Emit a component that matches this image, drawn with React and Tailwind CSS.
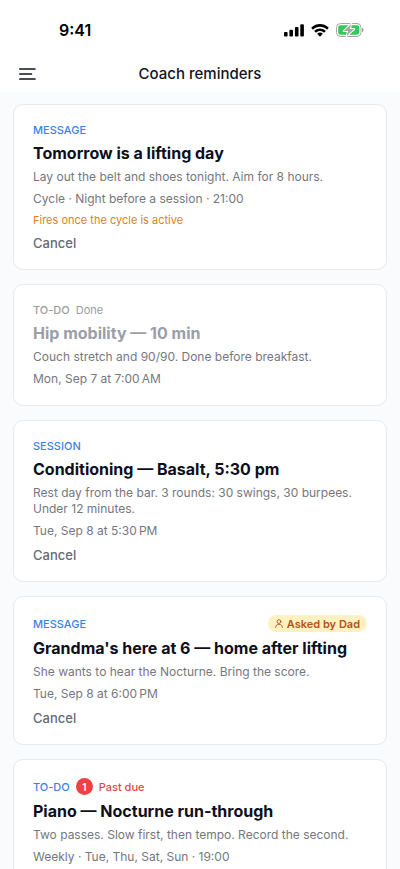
import { clsx } from 'clsx';

const reminders = [
  {
    id: 1,
    kind: 'MESSAGE',
    title: 'Tomorrow is a lifting day',
    body: 'Lay out the belt and shoes tonight. Aim for 8 hours.',
    when: 'Cycle · Night before a session · 21:00',
    note: 'Fires once the cycle is active',
    canCancel: true
  },
  {
    id: 2,
    kind: 'TO-DO',
    title: 'Hip mobility — 10 min',
    body: 'Couch stretch and 90/90. Done before breakfast.',
    when: 'Mon, Sep 7 at 7:00\u2009AM',
    done: true
  },
  {
    id: 3,
    kind: 'SESSION',
    title: 'Conditioning — Basalt, 5:30 pm',
    body: 'Rest day from the bar. 3 rounds: 30 swings, 30 burpees. Under 12 minutes.',
    when: 'Tue, Sep 8 at 5:30\u2009PM',
    canCancel: true
  },
  {
    id: 4,
    kind: 'MESSAGE',
    title: "Grandma's here at 6 — home after lifting",
    body: 'She wants to hear the Nocturne. Bring the score.',
    when: 'Tue, Sep 8 at 6:00\u2009PM',
    askedBy: 'Dad',
    canCancel: true
  },
  {
    id: 5,
    kind: 'TO-DO',
    title: 'Piano — Nocturne run-through',
    body: 'Two passes. Slow first, then tempo. Record the second.',
    when: 'Weekly · Tue, Thu, Sat, Sun · 19:00',
    pastDue: 1
  }
];

function StatusBar() {
  return (
    <div className="flex h-14 items-center justify-between pt-1 pr-9 pl-[59px]">
      <span className="text-base font-semibold text-black">9:41</span>
      <div className="flex items-center gap-[7px]">
        <svg width="20" height="13" viewBox="0 0 20 13" fill="#000" aria-hidden="true">
          <rect x="0" y="8" width="3.6" height="4.5" rx="1" />
          <rect x="5.4" y="5.8" width="3.6" height="6.7" rx="1" />
          <rect x="10.9" y="3" width="3.6" height="9.5" rx="1" />
          <rect x="16.3" y="0.2" width="3.6" height="12.3" rx="1" />
        </svg>
        <svg width="18" height="13" viewBox="0 0 17 12.3" fill="#000" aria-hidden="true">
          <path d="M8.5 2.6c2.4 0 4.7.9 6.4 2.6.1.1.3.1.5 0l1.2-1.3c.1-.1.1-.4 0-.5C12-1 5-1 .4 3.4c-.1.1-.1.4 0 .5l1.2 1.3c.1.1.3.1.5 0C3.8 3.5 6.1 2.6 8.5 2.6Z" />
          <path d="M8.5 6.7c1.3 0 2.6.5 3.5 1.4.1.1.4.1.5 0l1.3-1.3c.1-.1.1-.4 0-.5-3-2.8-7.6-2.8-10.6 0-.1.1-.1.4 0 .5l1.3 1.3c.1.1.4.1.5 0 .9-.9 2.2-1.4 3.5-1.4Z" />
          <path d="M11 9.5c.1-.1.1-.4 0-.5-1.5-1.2-3.5-1.2-5 0-.1.1-.1.4 0 .5l2.2 2.3c.1.1.4.1.5 0Z" />
        </svg>
        <svg width="28" height="14" viewBox="0 0 28 14" aria-hidden="true">
          <rect x="0.5" y="0.5" width="24.5" height="13" rx="4" fill="#fff" stroke="#a6a6a6" />
          <rect x="2.2" y="2.2" width="21.1" height="9.6" rx="2.4" fill="#34c759" />
          <path d="M26 4.8v4.4c1-.4 1.7-1.2 1.7-2.2S27 5.200 26 4.800Z" fill="#a6a6a6" />
          <path
            d="M15.2 1 7.800 8h4.400l-1.700 5 7.700-7h-4.500Z"
            fill="#a6a6a6"
            stroke="#fff"
            strokeWidth="2"
            paintOrder="stroke"
            strokeLinejoin="round"
          />
        </svg>
      </div>
    </div>
  );
}

function NavBar() {
  return (
    <div className="grid h-9 grid-cols-[48px_1fr_48px] items-center">
      <button type="button" aria-label="Menu" className="flex h-9 items-center pl-[19px]">
        <svg width="17" height="12" viewBox="0 0 17 12" fill="none" stroke="#11131f" strokeWidth="1.7" strokeLinecap="round" aria-hidden="true">
          <path d="M.9 1h15M.9 6h11.5M.9 11h15" />
        </svg>
      </button>
      <h1 className="text-center text-[15px] leading-5 font-medium text-[#11131f]">Coach reminders</h1>
    </div>
  );
}

function AskedBy({ name }) {
  return (
    <span className="ml-auto flex h-[17px] items-center gap-1 rounded-full bg-[#fff1c2] px-[7px] text-[11px] leading-[14px] font-semibold text-[#b45317]">
      <svg width="8" height="9" viewBox="0 0 8 9" fill="none" stroke="currentColor" strokeWidth="0.9" strokeLinecap="round" aria-hidden="true">
        <circle cx="4" cy="2.6" r="1.9" />
        <path d="M.6 8.400c0-1.900 1.500-3.100 3.400-3.100s3.400 1.200 3.400 3.100" />
      </svg>
      Asked by {name}
    </span>
  );
}

function ReminderCard({ reminder }) {
  const { kind, title, body, when, note, done, pastDue, askedBy, canCancel } = reminder;

  return (
    <li className="flex flex-col gap-1.5 rounded-[10px] border border-[#e8eaed] bg-white px-[19px] py-[18px] text-xs leading-4 text-[#75777f]">
      <div className="flex items-center gap-1.5 text-[11px] leading-[14px]">
        <span className={clsx('font-medium', done ? 'text-[#9b9da5]' : 'text-[#3b82e6]')}>{kind}</span>
        {done && <span className="text-[#9b9da5]">Done</span>}
        {pastDue && (
          <>
            <span className="flex size-[17px] items-center justify-center rounded-full bg-[#ef4043] text-[10px] font-semibold text-white">
              {pastDue}
            </span>
            <span className="font-medium text-[#e5484a]">Past due</span>
          </>
        )}
        {askedBy && <AskedBy name={askedBy} />}
      </div>

      <h2 className={clsx('text-base leading-5 font-bold', done ? 'text-[#9b9da8]' : 'text-[#0d0f1c]')}>
        {title}
      </h2>
      <p>{body}</p>
      <p>{when}</p>
      {note && <p className="text-[11px] leading-[14px] text-[#d98324]">{note}</p>}
      {canCancel && (
        <button type="button" className="self-start pt-0.5 text-[13px] leading-4 font-medium text-[#676a74]">
          Cancel
        </button>
      )}
    </li>
  );
}

export default function App() {
  return (
    <div className="flex h-screen flex-col bg-[#f9fbfc] font-['Inter',sans-serif]">
      <header className="shrink-0 bg-white">
        <StatusBar />
        <NavBar />
      </header>

      <main className="min-h-0 flex-1 overflow-y-auto px-[13px] py-3 [scrollbar-width:none]">
        <ul className="flex flex-col gap-3.5">
          {reminders.map(reminder => (
            <ReminderCard key={reminder.id} reminder={reminder} />
          ))}
        </ul>
      </main>
    </div>
  );
}
